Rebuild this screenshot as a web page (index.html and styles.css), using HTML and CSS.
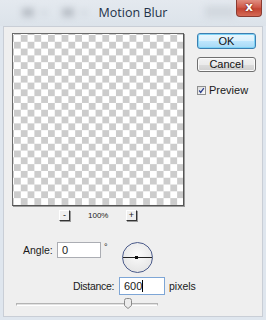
FILE: index.html
```html
<!DOCTYPE html>
<html>
<head>
<meta charset="utf-8">
<link rel="stylesheet" href="styles.css">
</head>
<body>
<div class="window">
  <div class="titlebar">
    <div class="blobs">
      <span class="blob b1"></span><span class="blob b2"></span>
      <span class="blob b3"></span><span class="blob b4"></span>
    </div>
    <div class="title">Motion Blur</div>
    <div class="close">x</div>
  </div>
  <div class="client">
    <div class="left">
      <div class="preview"></div>
      <div class="zoomrow">
        <span class="zbtn">-</span>
        <span class="zval">100%</span>
        <span class="zbtn">+</span>
      </div>
      <div class="anglerow">
        <span class="label alabel">Angle:</span>
        <span class="input angle">0</span>
        <span class="deg">°</span>
        <span class="dial"><span class="line"></span><span class="dot"></span></span>
      </div>
      <div class="distrow">
        <span class="label dlabel">Distance:</span>
        <span class="input dist focus">600<span class="caret"></span></span>
        <span class="unit">pixels</span>
      </div>
      <div class="slider">
        <span class="track"></span>
        <svg class="thumb" width="8" height="11" viewBox="0 0 8 11"><path d="M0.5 2.5 Q0.5 0.5 2.5 0.5 H5.5 Q7.5 0.5 7.5 2.5 V7.5 L4 10.5 L0.5 7.5 Z" fill="#ececec" stroke="#8a8a8a"/></svg>
      </div>
    </div>
    <div class="right">
      <div class="btn ok">OK</div>
      <div class="btn cancel">Cancel</div>
      <label class="check"><span class="box"><svg width="9" height="9" viewBox="0 0 9 9"><path d="M1.5 4.5 L3.5 7 L7.5 1.5" fill="none" stroke="#2b3f8c" stroke-width="1.6"/></svg></span>Preview</label>
    </div>
  </div>
</div>
</body>
</html>
```

FILE: styles.css
```css
* { box-sizing: border-box; }
html, body { margin: 0; padding: 0; }
body {
  width: 266px;
  height: 320px;
  overflow: hidden;
  font-family: "Liberation Sans", Arial, sans-serif;
  font-size: 11px;
  color: #1a1a1a;
}
.window {
  width: 266px;
  height: 320px;
  background: #dfe6ee;
  display: flex;
  flex-direction: column;
  padding: 0 3px 3px 3px;
}
.titlebar {
  height: 26px;
  position: relative;
  display: flex;
  align-items: center;
  justify-content: center;
  background: linear-gradient(#e4e9ef, #dce3ea);
  margin: 0 -3px;
}
.blobs { position: absolute; left: 0; top: 0; width: 266px; height: 26px; filter: blur(3px); }
.blob { position: absolute; background: #b8bec6; border-radius: 2px; }
.b1 { left: 22px; top: 8px; width: 12px; height: 9px; }
.b2 { left: 42px; top: 11px; width: 4px; height: 3px; }
.b3 { left: 62px; top: 8px; width: 12px; height: 9px; }
.b4 { left: 82px; top: 11px; width: 4px; height: 3px; }
.blobs::after { content: ""; position: absolute; left: 205px; top: 6px; width: 30px; height: 12px; background: #d2d8df; }
.title {
  position: relative;
  font-family: "Open Sans", "Liberation Sans", sans-serif;
  font-size: 12.5px;
  color: #1e3148;
  margin-top: -1px;
}
.close {
  position: absolute;
  right: 4px;
  top: 0;
  width: 26px;
  height: 17px;
  background: linear-gradient(#e08e80, #cf5a4a 45%, #c24432 55%, #d46a56);
  border: 1px solid #8a3b31;
  border-top: none;
  border-radius: 0 0 4px 4px;
  color: #fff;
  font-family: "DejaVu Sans", sans-serif;
  font-weight: bold;
  font-size: 12px;
  line-height: 14px;
  text-align: center;
  text-shadow: 0 0 2px #6b1c12, 0 0 1px #6b1c12;
}
.client {
  flex: 1;
  background: #efefef;
  border: 1px solid #c9ced6;
  display: flex;
  padding: 6px 0 0 7px;
}
.left { width: 186px; display: flex; flex-direction: column; padding-left: 1px; }
.preview {
  width: 172px;
  height: 173px;
  border: 1px solid #6b6b6b;
  border-right-color: #555;
  border-bottom-color: #555;
  background: repeating-conic-gradient(#cccccc 0 25%, #ffffff 0 50%) 1px 1px / 13.6px 13.6px;
  box-shadow: 1px 1px 0 #9c9c9c;
}
.zoomrow {
  width: 172px;
  display: flex;
  justify-content: center;
  align-items: center;
  margin-top: 4px;
  height: 11px;
  gap: 18px;
}
.zbtn {
  width: 11px;
  height: 11px;
  border: 1px solid #fff;
  border-right-color: #333;
  border-bottom-color: #333;
  font-size: 9px;
  line-height: 8px;
  text-align: center;
  color: #222;
  box-shadow: 1px 1px 0 #999;
}
.zval { font-size: 8px; color: #222; width: 20px; text-align: center; }
.anglerow {
  display: flex;
  align-items: flex-start;
  margin-top: 21px;
  padding-left: 11px;
  height: 32px;
}
.label { line-height: 16px; font-size: 10.5px; }
.alabel { width: 34px; }
.dlabel { width: 46px; letter-spacing: -0.3px; }
.input {
  background: #fff;
  border: 1px solid #abadb3;
  height: 16px;
  line-height: 14px;
  padding-left: 4px;
  font-size: 11px;
  color: #1a1a1a;
}
.angle { width: 44px; }
.deg { font-size: 9px; margin-left: 3px; line-height: 9px; margin-top: 1px; }
.dial {
  position: relative;
  width: 31px;
  height: 31px;
  border-radius: 50%;
  border: 1.5px solid #4a5a8a;
  background: radial-gradient(circle at 50% 40%, #fbfbfb, #e6e6e6 75%, #d8d8d8);
  margin-left: 14px;
}
.line { position: absolute; left: 0; right: 0; top: 13.5px; height: 1px; background: #222; }
.dot { position: absolute; left: 12.5px; top: 12.5px; width: 3px; height: 3px; background: #111; }
.distrow {
  display: flex;
  align-items: center;
  margin-top: 3px;
  padding-left: 61px;
  height: 18px;
}
.dist { width: 46px; height: 18px; line-height: 16px; position: relative; }
.focus { border-color: #7ea6d6; }
.caret { display: inline-block; width: 1px; height: 12px; background: #000; vertical-align: -2px; }
.unit { margin-left: 4px; font-size: 10.5px; }
.slider {
  position: relative;
  margin-top: 3px;
  margin-left: 4px;
  width: 142px;
  height: 12px;
}
.track {
  position: absolute;
  left: 0; right: 0; top: 5px;
  height: 3px;
  border: 1px solid #b4b4b4;
  border-bottom-color: #fff;
  background: #e2e2e2;
}
.thumb { position: absolute; left: 108px; top: 0; }
.right { display: flex; flex-direction: column; }
.btn {
  width: 59px;
  text-align: center;
  border-radius: 3px;
  font-size: 11px;
  color: #111;
}
.ok {
  height: 16px;
  line-height: 14px;
  border: 1px solid #3c7fb1;
  background: linear-gradient(#eaf6fd, #d9f0fc 50%, #bee6fd 51%, #a7d9f5);
  box-shadow: inset 0 0 0 1px #7fd3f5;
}
.cancel {
  height: 15px;
  line-height: 13px;
  margin-top: 8px;
  border: 1px solid #707070;
  background: linear-gradient(#f2f2f2, #ebebeb 50%, #dddddd 51%, #cfcfcf);
  box-shadow: inset 0 0 0 1px #fbfbfb;
}
.check { display: flex; align-items: center; margin-top: 12px; gap: 3px; font-size: 11px; }
.box {
  width: 9px; height: 9px;
  border: 1px solid #8e8f8f;
  background: linear-gradient(135deg, #dcdcdc, #fbfbfb);
  display: flex; align-items: center; justify-content: center;
}
.box svg { width: 7px; height: 7px; }
```
